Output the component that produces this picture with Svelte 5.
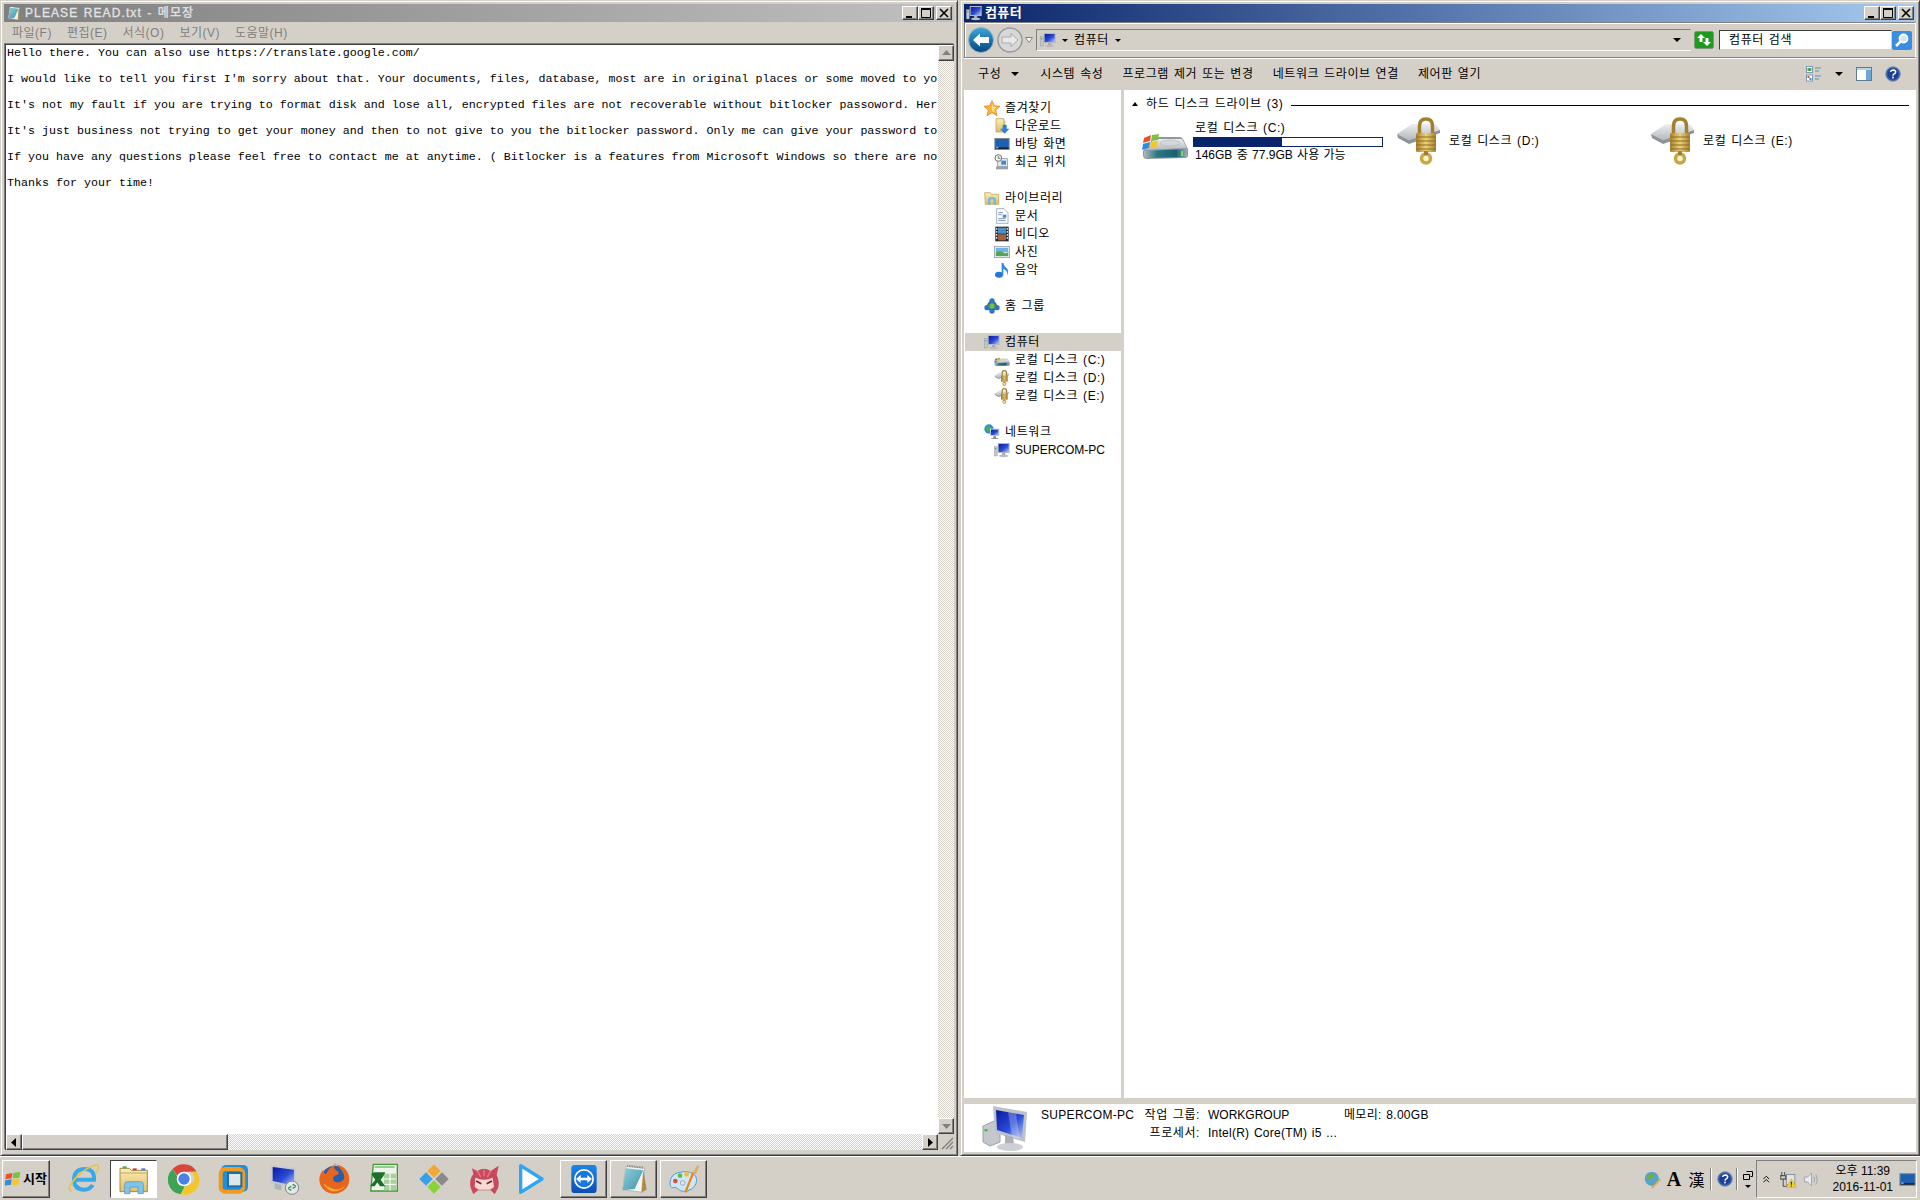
<script>
  const notes = [
    "Hello there. You can also use https://translate.google.com/",
    "I would like to tell you first I'm sorry about that. Your documents, files, database, most are in original places or some moved to yo",
    "It's not my fault if you are trying to format disk and lose all, encrypted files are not recoverable without bitlocker passoword. Her",
    "It's just business not trying to get your money and then to not give to you the bitlocker password. Only me can give your password to",
    "If you have any questions please feel free to contact me at anytime. ( Bitlocker is a features from Microsoft Windows so there are no",
    "Thanks for your time!"
  ];
  const menus = ["파일(F)", "편집(E)", "서식(O)", "보기(V)", "도움말(H)"];
  const actions = ["시스템 속성", "프로그램 제거 또는 변경", "네트워크 드라이브 연결", "제어판 열기"];
  const tree = [
    { icon: "star", label: "즐겨찾기", kids: [["dl", "다운로드"], ["desk", "바탕 화면"], ["recent", "최근 위치"]] },
    { icon: "lib", label: "라이브러리", kids: [["doc", "문서"], ["video", "비디오"], ["photo", "사진"], ["music", "음악"]] },
    { icon: "home", label: "홈 그룹", kids: [] },
    { icon: "pc", label: "컴퓨터", selected: true, kids: [["cdrive", "로컬 디스크 (C:)"], ["lockdrive", "로컬 디스크 (D:)"], ["lockdrive", "로컬 디스크 (E:)"]] },
    { icon: "net", label: "네트워크", kids: [["pc", "SUPERCOM-PC"]] }
  ];
  const free = 77.9;
  const total = 146;
  const used = ((total - free) / total) * 100;
  const pinned = [
    ["ie", ""], ["explorer", "active"], ["chrome", ""], ["vmware", ""], ["rdp", ""], ["firefox", ""],
    ["excel", ""], ["diamond", ""], ["anime", ""], ["play", ""], ["teamviewer", "running"], ["notepad", "running"], ["paint", "running"]
  ];
</script>

{#snippet icon(name, size)}
  <svg class="ic" width={size} height={size} viewBox="0 0 48 48"><use href={`#i-${name}`} /></svg>
{/snippet}

{#snippet winButtons()}
  <div class="winbtns">
    <button class="raised tb"><svg width="14" height="12" viewBox="0 0 14 12"><rect x="3" y="9" width="6" height="2" /></svg></button>
    <button class="raised tb"><svg width="14" height="12" viewBox="0 0 14 12"><path d="M2.500 2.500h9v8h-9z" fill="none" stroke="#000" /><rect x="2" y="1" width="10" height="2" /></svg></button>
    <button class="raised tb close"><svg width="14" height="12" viewBox="0 0 14 12"><path d="M3 2l8 8M11 2l-8 8" stroke="#000" stroke-width="1.6" /></svg></button>
  </div>
{/snippet}

<svg class="defs" width="0" height="0" aria-hidden="true">
  <defs>
    <linearGradient id="g-screen" x1="0" y1="0" x2="1" y2="1"><stop offset="0" stop-color="#0a1a9c" /><stop offset="0.55" stop-color="#2a4ad8" /><stop offset="1" stop-color="#b6c8f6" /></linearGradient>
    <linearGradient id="g-back" x1="0" y1="0" x2="0" y2="1"><stop offset="0" stop-color="#3aa6de" /><stop offset="1" stop-color="#04477e" /></linearGradient>
    <linearGradient id="g-fold" x1="0" y1="0" x2="0" y2="1"><stop offset="0" stop-color="#fbeeb4" /><stop offset="1" stop-color="#e0bd6a" /></linearGradient>
    <linearGradient id="g-gold" x1="0" y1="0" x2="1" y2="0"><stop offset="0" stop-color="#a67f28" /><stop offset="0.5" stop-color="#ecd27c" /><stop offset="1" stop-color="#a67f28" /></linearGradient>
    <linearGradient id="g-pad" x1="0" y1="0" x2="1" y2="1"><stop offset="0" stop-color="#8fd0dc" /><stop offset="1" stop-color="#3f93a8" /></linearGradient>
    <linearGradient id="g-tv" x1="0" y1="0" x2="0" y2="1"><stop offset="0" stop-color="#1a86e8" /><stop offset="1" stop-color="#0c4fb4" /></linearGradient>
    <linearGradient id="g-drive" x1="0" y1="0" x2="0" y2="1"><stop offset="0" stop-color="#eceef0" /><stop offset="1" stop-color="#b4b9be" /></linearGradient>
    <linearGradient id="g-band" x1="0" y1="0" x2="1" y2="0"><stop offset="0" stop-color="#b2b8bc" /><stop offset="0.3" stop-color="#2a7686" /><stop offset="0.75" stop-color="#1c6070" /><stop offset="1" stop-color="#a6acb0" /></linearGradient>
  </defs>

  <symbol id="i-pc" viewBox="0 0 48 48">
    <rect x="1" y="14" width="9" height="28" fill="#c4c8cc" stroke="#7c8288" />
    <rect x="3" y="18" width="4" height="4" fill="#40c040" />
    <path d="M11 3h36v30H11z" fill="#b4b9c0" />
    <path d="M14 6h30v24H14z" fill="url(#g-screen)" />
    <path d="M24 33h10v6H24z" fill="#a4a9b0" />
    <ellipse cx="29" cy="42" rx="14" ry="3.500" fill="#b8bcc2" />
  </symbol>
  <symbol id="i-pcbig" viewBox="0 0 48 48">
    <path d="M2 22l11-5 6 3v18l-10 4-7-4z" fill="#c4c8cc" stroke="#9aa0a6" />
    <rect x="3.500" y="25" width="3" height="2.500" fill="#40c040" />
    <path d="M12 2l34 6-2 30-30-9z" fill="#bcc2c8" />
    <path d="M15 6l28 5-2 23-25-8z" fill="url(#g-screen)" />
    <path d="M27 8l8 2 4 25-8-2z" fill="#fff" opacity="0.25" />
    <path d="M24 31l8 2 1 7h-9z" fill="#aab0b6" />
    <ellipse cx="29" cy="43" rx="13" ry="4" fill="#ccd0d4" />
  </symbol>
  <symbol id="i-star" viewBox="0 0 48 48">
    <path d="M24 2l7 15 17 2-13 11 4 17-15-9-15 9 4-17L0 19l17-2z" fill="#f9b53a" stroke="#d9702a" stroke-width="2" />
    <path d="M24 10l4 10 10 1-8 7 2 9-8-5z" fill="#ffe08a" />
  </symbol>
  <symbol id="i-dl" viewBox="0 0 48 48">
    <path d="M6 2h24v40H6z" fill="url(#g-fold)" stroke="#b6974a" stroke-width="2" />
    <path d="M28 8h6v32h-6z" fill="#d8bc70" />
    <path d="M26 20h12v12h8L32 47 18 32h8z" fill="#2a82d6" />
  </symbol>
  <symbol id="i-desk" viewBox="0 0 48 48">
    <rect x="1" y="6" width="46" height="36" fill="#7d8a96" />
    <rect x="4" y="9" width="40" height="27" fill="#1d5fb0" />
    <rect x="4" y="34" width="40" height="5" fill="#1b2430" />
    <rect x="6" y="32" width="7" height="5" fill="#57b0e8" />
  </symbol>
  <symbol id="i-recent" viewBox="0 0 48 48">
    <rect x="10" y="14" width="30" height="24" fill="#e4e7ea" stroke="#858b92" stroke-width="2" />
    <rect x="22" y="20" width="14" height="12" fill="#3a8ad2" />
    <circle cx="13" cy="12" r="10" fill="#f4f4f4" stroke="#6e747a" stroke-width="3" />
    <path d="M13 6v7h6" fill="none" stroke="#444" stroke-width="2" />
    <path d="M6 38h36v8H6z" fill="#9aa0a6" />
  </symbol>
  <symbol id="i-lib" viewBox="0 0 48 48">
    <path d="M2 8h16l4 5h22v30H4z" fill="url(#g-fold)" stroke="#b6974a" stroke-width="2" />
    <path d="M12 44V30q0-9 12-9t12 9v14h-7V32q0-4-5-4t-5 4v12z" fill="#6fb9e4" />
  </symbol>
  <symbol id="i-doc" viewBox="0 0 48 48">
    <path d="M8 2h22l12 12v32H8z" fill="#fff" stroke="#7f8a96" stroke-width="2" />
    <path d="M13 14h14M13 20h10M13 38h22M13 32h22" stroke="#5b7ea8" stroke-width="2.500" />
    <rect x="26" y="20" width="11" height="9" fill="#4a8cc8" />
  </symbol>
  <symbol id="i-video" viewBox="0 0 48 48">
    <rect x="4" y="2" width="40" height="44" fill="#1e2a34" />
    <rect x="12" y="5" width="24" height="18" fill="#4a90c8" />
    <rect x="12" y="25" width="24" height="18" fill="#a5623a" />
    <path d="M6 6h4v5H6zM6 15h4v5H6zM6 24h4v5H6zM6 33h4v5H6zM38 6h4v5h-4zM38 15h4v5h-4zM38 24h4v5h-4zM38 33h4v5h-4z" fill="#dde" />
  </symbol>
  <symbol id="i-photo" viewBox="0 0 48 48">
    <rect x="1" y="7" width="46" height="34" fill="#fff" stroke="#7f8a96" stroke-width="2" />
    <rect x="5" y="11" width="38" height="14" fill="#6db7de" />
    <path d="M5 25q12-7 22 0t16-2v14H5z" fill="#5aa05a" />
  </symbol>
  <symbol id="i-music" viewBox="0 0 48 48">
    <ellipse cx="15" cy="38" rx="12" ry="9" fill="#1f78d4" />
    <path d="M23 38V3h5q2 10 10 16t1 22q3-16-11-20v17z" fill="#2a8ae0" />
  </symbol>
  <symbol id="i-home" viewBox="0 0 48 48">
    <circle cx="24" cy="24" r="15" fill="#3a7a50" />
    <circle cx="24" cy="9" r="8" fill="#2f74c8" />
    <circle cx="9" cy="29" r="8" fill="#2f74c8" />
    <circle cx="39" cy="29" r="8" fill="#2f74c8" />
    <circle cx="24" cy="39" r="8" fill="#2f74c8" />
    <circle cx="24" cy="24" r="8" fill="#6ec24a" />
  </symbol>
  <symbol id="i-net" viewBox="0 0 48 48">
    <circle cx="15" cy="15" r="14" fill="#2f8fd6" />
    <path d="M6 10q8-6 14 0t-4 10-10-10z" fill="#4ab04a" />
    <rect x="18" y="14" width="28" height="22" fill="#c6cbd2" />
    <rect x="21" y="17" width="22" height="16" fill="url(#g-screen)" />
    <path d="M28 36h8v6h-8zM22 42h20v3H22z" fill="#8c9298" />
  </symbol>
  <symbol id="i-cdrive" viewBox="0 0 48 48">
    <path d="M2 34L12 22q1-2 4-2h22q3 0 4 2l5 10v6q0 3-3 3L6 42q-4 0-4-4z" fill="#8f979c" />
    <path d="M3 33l10-11h28l5 9z" fill="url(#g-drive)" />
    <ellipse cx="29" cy="26" rx="10" ry="3" fill="#d4d7da" stroke="#a6abb0" stroke-width="0.500" />
    <path d="M3 34l43-2v6q0 2-2 2L6 41q-3 0-3-3z" fill="url(#g-band)" />
    <rect x="40" y="34" width="2" height="5" fill="#5fe25f" />
    <path d="M3 21l7-3-1 6-7 2z" fill="#e8532c" />
    <path d="M11 18l7-1-1 6-7 1z" fill="#7cc23c" />
    <path d="M2 27l7-2-1 6-7 2z" fill="#2f8ae0" />
    <path d="M10 25l7-1-1 6-7 1z" fill="#f6c52e" />
  </symbol>
  <symbol id="i-lockdrive" viewBox="0 0 48 48">
    <path d="M2 17L17 7h24l4 6-31 10z" fill="url(#g-drive)" />
    <path d="M2 17l12 6 31-10v3L14 27 3 21z" fill="#8e9499" />
    <path d="M24.500 18V9q0-7 6.500-7t6.500 7v9" fill="none" stroke="#a37f2c" stroke-width="3.500" />
    <rect x="21" y="16" width="20" height="19" rx="1.500" fill="url(#g-gold)" />
    <path d="M21 20h20M21 24h20M21 28h20M21 32h20" stroke="#8e6d22" />
    <circle cx="31" cy="41.500" r="4.500" fill="#fff3c8" stroke="#c8a64a" stroke-width="3.500" />
    <rect x="29" y="34" width="4" height="4" fill="#a37f2c" />
  </symbol>

  <symbol id="i-flag" viewBox="0 0 48 48">
    <path d="M3 10l19-4-2 16-19 3z" fill="#e8532c" />
    <path d="M25 5l21-2-3 17-20 2z" fill="#7cc23c" />
    <path d="M1 28l19-3-2 16-19 3z" fill="#2f8ae0" />
    <path d="M23 25l20-2-3 18-19 2z" fill="#f6c52e" />
  </symbol>
  <symbol id="i-ie" viewBox="0 0 48 48">
    <path d="M10 25h29q1-16-14-16-15 0-16 15 0 16 15 16 9 0 13-7" fill="none" stroke="#38a8ea" stroke-width="6" />
    <path d="M6 42Q-4 40 12 22 30 4 44 3q5 3-3 13" fill="none" stroke="#ecc23c" stroke-width="2.500" />
  </symbol>
  <symbol id="i-explorer" viewBox="0 0 48 48">
    <path d="M3 8h14l3 3h24v32H3z" fill="url(#g-fold)" stroke="#a88a4a" stroke-width="1.500" />
    <path d="M4 15h39" stroke="#a88a4a" />
    <rect x="7" y="5" width="6" height="3" fill="#3fb04a" />
    <rect x="22" y="8" width="6" height="3" fill="#d83a3a" />
    <rect x="35" y="8" width="6" height="3" fill="#3a8ad8" />
    <path d="M10 46V32q0-4 4-4h20q4 0 4 4v14h-8V36H18v10z" fill="#7fc4ea" stroke="#4a92c0" />
  </symbol>
  <symbol id="i-chrome" viewBox="0 0 48 48">
    <path d="M24 2a22 22 0 0 1 19 11H24a11 11 0 0 0-10 6L7 9A22 22 0 0 1 24 2z" fill="#d9453a" />
    <path d="M7 9l9 15a9 9 0 0 0 10 9l-7 14A22 22 0 0 1 7 9z" fill="#3fa254" />
    <path d="M43 13a22 22 0 0 1-24 34l9-15a9 9 0 0 0 4-19z" fill="#f6c52e" />
    <circle cx="24" cy="24" r="11" fill="#fff" />
    <circle cx="24" cy="24" r="8.500" fill="#4a82e4" />
  </symbol>
  <symbol id="i-vmware" viewBox="0 0 48 48">
    <rect x="5" y="3" width="40" height="40" rx="7" fill="#1d8fdc" />
    <rect x="4" y="9" width="34" height="34" rx="7" fill="none" stroke="#f29a1e" stroke-width="6" />
    <rect x="15" y="15" width="20" height="20" fill="#dfe6ea" stroke="#1a6fa8" stroke-width="3" />
  </symbol>
  <symbol id="i-rdp" viewBox="0 0 48 48">
    <path d="M4 3l38 4v30L4 30z" fill="#c6cbd2" />
    <path d="M7 6l32 4v24L7 27z" fill="url(#g-screen)" />
    <path d="M10 30l10 3v8l-10-2z" fill="#b0b5bb" />
    <circle cx="36" cy="37" r="10" fill="#e4e8ea" stroke="#7c858c" stroke-width="1.500" />
    <path d="M30 38l5-3M30 38l5 3M42 35l-5 3M42 35l-5-3" stroke="#2f9a4a" stroke-width="2" />
  </symbol>
  <symbol id="i-firefox" viewBox="0 0 48 48">
    <circle cx="25" cy="24" r="20" fill="#2a5ea8" />
    <path d="M25 2c12 1 22 10 22 22 0 13-10 22-23 22S2 36 2 24c0-6 3-11 6-14 0 4 2 6 4 7 2-6 7-11 13-15-2 5 0 8 4 10 3 2 2 5-1 6-4 1-7 5-4 9 4 4 12 2 15-3 2-6-3-15-14-24z" fill="#e8651e" />
    <path d="M8 30c3 9 12 14 21 12 6-1 10-5 12-9-4 6-13 9-21 5-5-2-9-5-12-8z" fill="#f7b02a" />
  </symbol>
  <symbol id="i-excel" viewBox="0 0 48 48">
    <path d="M8 2h36v40H4z" fill="#eef4ea" stroke="#3f9a3a" stroke-width="2" />
    <path d="M24 16h18v25H24z" fill="#a9cf9c" />
    <path d="M24 24h18M24 32h18M33 16v25" stroke="#fff" stroke-width="1.500" />
    <path d="M8 13h17l-3 6-4 5 7 10H17l-4-6-4 6H2l8-10-6-8z" fill="#1f6f2c" transform="translate(1 1)" />
    <path d="M10 6h30" stroke="#6cb85e" stroke-width="2" />
  </symbol>
  <symbol id="i-diamond" viewBox="0 0 48 48">
    <path d="M24 2l10 10-10 10-10-10z" fill="#f2a838" />
    <path d="M36 14l10 10-10 10-10-10z" fill="#8a8a8a" />
    <path d="M12 14l10 10-10 10L2 24z" fill="#38a0e8" />
    <path d="M24 26l10 10-10 10-10-10z" fill="#8ad23a" />
  </symbol>
  <symbol id="i-anime" viewBox="0 0 48 48">
    <path d="M6 8l8 4q10-7 20 0l12-8-3 14q5 10 2 20l-5 9-6-6H15l-7 6-4-10Q1 25 8 17z" fill="#c84a5c" />
    <path d="M11 22q13 6 26 0l2 14-6 4H16l-6-4z" fill="#f7d8d4" />
    <path d="M12 27l8 4M36 27l-8 4" stroke="#7a1c2c" stroke-width="2.500" />
    <path d="M14 12l5 9M24 10v10M34 12l-5 9" stroke="#e87a86" stroke-width="2" />
  </symbol>
  <symbol id="i-play" viewBox="0 0 48 48">
    <path d="M4 4l32 20L4 44z" fill="#fff" stroke="#2ea6f5" stroke-width="5" stroke-linejoin="round" />
  </symbol>
  <symbol id="i-teamviewer" viewBox="0 0 48 48">
    <rect x="5" y="3" width="38" height="42" rx="5" fill="url(#g-tv)" />
    <circle cx="24" cy="24" r="15" fill="#fff" />
    <circle cx="24" cy="24" r="12.500" fill="#1a78dc" />
    <path d="M12 24l7-6v4h10v-4l7 6-7 6v-4H19v4z" fill="#fff" />
  </symbol>
  <symbol id="i-notepad" viewBox="0 0 48 48">
    <path d="M12 5l28 3-3 36-30-4z" fill="#f4f6f6" stroke="#9aa4a8" />
    <path d="M12 8l26 3-13 28-18 2z" fill="url(#g-pad)" />
    <path d="M38 10l5 30-8 4z" fill="#b08a48" />
    <path d="M14 4l24 3" stroke="#777" stroke-width="3" stroke-dasharray="1 1.500" />
  </symbol>
  <symbol id="i-paint" viewBox="0 0 48 48">
    <path d="M3 30Q3 14 24 13q18 0 19 12 0 12-14 17-9 2-14-3-3-4-8-2-4 0-4-7z" fill="#cfe6f4" stroke="#5d9cc8" stroke-width="1.500" />
    <circle cx="11" cy="27" r="3.500" fill="#e04a3a" />
    <circle cx="18" cy="19" r="3.500" fill="#5cc04a" />
    <circle cx="28" cy="17" r="3.500" fill="#f2c02e" />
    <circle cx="22" cy="30" r="3.500" fill="#d8e8f2" stroke="#6a9cc0" />
    <path d="M26 44L38 14" stroke="#e8861e" stroke-width="3.500" />
    <path d="M37 15l7-12 3 2-5 12z" fill="#d8b070" />
  </symbol>
  <symbol id="i-globe" viewBox="0 0 48 48">
    <circle cx="22" cy="22" r="20" fill="#5aa2c8" />
    <path d="M8 14q10-8 22-6-2 8-8 10t-6 10q-8-4-8-14z" fill="#6fb040" />
    <path d="M24 44L44 22l3 3-20 21-6 1z" fill="#f2c25a" stroke="#a8702a" />
  </symbol>
  <symbol id="i-help" viewBox="0 0 48 48">
    <circle cx="24" cy="24" r="22" fill="#2f5aa8" stroke="#8a96a8" stroke-width="3" />
    <circle cx="24" cy="24" r="16" fill="#1f3e96" />
    <path d="M17 18q1-6 8-6 7 1 7 6 0 4-5 6-3 2-3 5" fill="none" stroke="#fff" stroke-width="4.500" />
    <rect x="21.500" y="32" width="5" height="5" fill="#fff" />
  </symbol>
  <symbol id="i-traynet" viewBox="0 0 48 48">
    <rect x="18" y="10" width="24" height="28" fill="#dfe3e6" stroke="#71787e" stroke-width="2" />
    <path d="M5 3v10M13 3v10M2 13h14v10H2zM9 23v20h12" fill="none" stroke="#555" stroke-width="3" />
    <path d="M32 22l14 24H18z" fill="#f6d02e" stroke="#a88a1a" />
    <rect x="30.500" y="30" width="3" height="9" fill="#222" />
    <rect x="30.500" y="41" width="3" height="3" fill="#222" />
  </symbol>
  <symbol id="i-speaker" viewBox="0 0 48 48">
    <path d="M4 17h9L24 6v36L13 31H4z" fill="#e8eaec" stroke="#8a9096" stroke-width="2" />
    <path d="M30 16q5 8 0 16M36 10q8 14 0 28" fill="none" stroke="#a2a8ae" stroke-width="3" />
  </symbol>
</svg>

<div class="desktop">
  <div class="windows">
    <section class="win notepad">
      <header class="title inactive">
        {@render icon("notepad", 16)}
        <span class="title-text">PLEASE READ.txt - 메모장</span>
        {@render winButtons()}
      </header>
      <nav class="menu">
        {#each menus as m}<span>{m}</span>{/each}
      </nav>
      <div class="pane">
        <div class="text">
          {#each notes as line}<p>{line}</p>{/each}
        </div>
        <div class="vscroll">
          <button class="raised sb"><svg width="9" height="6" viewBox="0 0 9 6"><path d="M0 5h9L4.500 0z" fill="#808080" /></svg></button>
          <div class="track"></div>
          <button class="raised sb"><svg width="9" height="6" viewBox="0 0 9 6"><path d="M0 1h9L4.500 6z" fill="#808080" /></svg></button>
        </div>
        <div class="hscroll">
          <button class="raised sb"><svg width="6" height="9" viewBox="0 0 6 9"><path d="M5 0v9L0 4.500z" /></svg></button>
          <div class="raised thumb"></div>
          <div class="track"></div>
          <button class="raised sb"><svg width="6" height="9" viewBox="0 0 6 9"><path d="M1 0v9l5-4.500z" /></svg></button>
        </div>
        <div class="grip"><svg width="16" height="16" viewBox="0 0 16 16"><path d="M15 4L4 15M15 8l-7 7M15 12l-3 3" stroke="#808080" stroke-width="1.400" /></svg></div>
      </div>
    </section>

    <section class="win explorer">
      <header class="title active">
        {@render icon("pc", 16)}
        <span class="title-text big">컴퓨터</span>
        {@render winButtons()}
      </header>

      <div class="navbar">
        <svg class="navbtn" width="26" height="26" viewBox="0 0 26 26">
          <circle cx="13" cy="13" r="12.500" fill="url(#g-back)" stroke="#9fb2c0" />
          <path d="M5 13l7-6.500V10h9v6h-9v3.500z" fill="#fff" />
        </svg>
        <svg class="navbtn fwd" width="26" height="26" viewBox="0 0 26 26">
          <circle cx="13" cy="13" r="12" fill="#d8d8d8" stroke="#9a9a9a" stroke-width="1.500" />
          <path d="M21 13l-7-6.500V10H5v6h9v3.500z" fill="#e8e8e8" stroke="#aaa" />
        </svg>
        <svg class="navdrop" width="8" height="6" viewBox="0 0 8 6"><path d="M.5.5h7L4 5.500z" fill="#fff" stroke="#808080" /></svg>
        <div class="address">
          {@render icon("pc", 16)}
          <i class="caret small"></i>
          <span>컴퓨터</span>
          <i class="caret small"></i>
          <i class="caret end"></i>
        </div>
        <button class="go">
          <svg width="20" height="18" viewBox="0 0 20 18">
            <rect x=".5" y=".5" width="19" height="17" rx="2" fill="#1f9a1f" stroke="#7a9a7a" />
            <path d="M3 7l4-4 4 4H8.500v4h-3V7zM17 11l-4 4-4-4h2.500V7h3v4z" fill="#fff" />
          </svg>
        </button>
        <div class="search">
          <span>컴퓨터 검색</span>
        </div>
        <button class="searchbtn">
          <svg width="20" height="19" viewBox="0 0 20 19">
            <rect width="20" height="19" rx="2" fill="#3a8ee0" />
            <circle cx="11.500" cy="7.500" r="4" fill="#cfe6f8" stroke="#fff" stroke-width="1.800" />
            <path d="M8.500 10.500L4 15" stroke="#fff" stroke-width="2.500" />
          </svg>
        </button>
      </div>

      <div class="toolbar">
        <span class="organize">구성</span><i class="caret"></i>
        {#each actions as a}<span class="act">{a}</span>{/each}
        <div class="tools">
          <svg width="16" height="16" viewBox="0 0 16 16">
            <rect x=".5" y=".5" width="6" height="6" fill="#fff" stroke="#7f9ab0" />
            <rect x="1.500" y="2" width="4" height="3" fill="#5aa05a" />
            <rect x=".5" y="9" width="6" height="6" fill="#fff" stroke="#7f9ab0" />
            <rect x="1.500" y="10" width="2" height="2" fill="#d84a3a" />
            <rect x="3.500" y="12" width="2" height="2" fill="#3a8ad8" />
            <path d="M9 2h6M9 5h4M9 10h6M9 13h4" stroke="#6a8aa8" />
          </svg>
          <i class="caret"></i>
          <svg class="panebtn" width="16" height="16" viewBox="0 0 16 16">
            <rect x=".5" y="1.500" width="15" height="13" fill="#fff" stroke="#5a7a98" />
            <rect x="10" y="2" width="5" height="12" fill="#6aa8d8" />
            <rect x="1" y="2" width="14" height="2" fill="#bcd4e8" />
          </svg>
          {@render icon("help", 16)}
        </div>
      </div>

      <div class="body">
        <aside class="side">
          {#each tree as group}
            <ul class="group">
              <li class="node" class:selected={group.selected}>
                {@render icon(group.icon, 16)}<span>{group.label}</span>
              </li>
              {#each group.kids as [ic, label]}
                <li class="node kid">{@render icon(ic, 16)}<span class:latin={label === "SUPERCOM-PC"}>{label}</span></li>
              {/each}
            </ul>
          {/each}
        </aside>
        <main class="content">
          <div class="group-head">
            <svg width="6" height="4" viewBox="0 0 6 4"><path d="M0 4h6L3 0z" /></svg>
            <span>하드 디스크 드라이브 (3)</span>
            <div class="rule"></div>
          </div>
          <div class="drives">
            <div class="drive">
              {@render icon("cdrive", 48)}
              <div class="info">
                <div class="dname">로컬 디스크 (C:)</div>
                <div class="bar"><div class="fill" style={`width:${used}%`}></div></div>
                <div class="dsub">146GB 중 77.9GB 사용 가능</div>
              </div>
            </div>
            <div class="drive">
              {@render icon("lockdrive", 48)}
              <div class="dname">로컬 디스크 (D:)</div>
            </div>
            <div class="drive">
              {@render icon("lockdrive", 48)}
              <div class="dname">로컬 디스크 (E:)</div>
            </div>
          </div>
        </main>
      </div>

      <footer class="status">
        {@render icon("pcbig", 48)}
        <div class="facts">
          <div class="f1"><span class="host">SUPERCOM-PC</span><span>작업 그룹:</span></div>
          <div class="latin">WORKGROUP</div>
          <div class="mem">메모리: 8.00GB</div>
          <div class="f2">프로세서:</div>
          <div class="wide">Intel(R) Core(TM) i5 ...</div>
        </div>
      </footer>
    </section>
  </div>

  <div class="taskbar">
    <button class="raised start">{@render icon("flag", 16)}<b>시작</b></button>
    <div class="pins">
      {#each pinned as [name, state]}
        <div class="pin {state}">{@render icon(name, 32)}</div>
      {/each}
    </div>
    <div class="lang">
      {@render icon("globe", 17)}
      <span class="a">A</span>
      <span class="han">漢</span>
      <span class="sep"></span>
      {@render icon("help", 16)}
      <span class="sep"></span>
      <div class="langmin">
        <svg width="10" height="9" viewBox="0 0 10 9"><path d="M3.500.5h6v5h-2M.5 3.500h6v5h-6z" fill="none" stroke="#000" /></svg>
        <i class="caret small"></i>
      </div>
    </div>
    <div class="tray">
      <svg class="chev" width="7" height="8" viewBox="0 0 7 8"><path d="M.5 4l3-3 3 3M.5 7.500l3-3 3 3" fill="none" stroke="#000" /></svg>
      {@render icon("traynet", 17)}
      {@render icon("speaker", 17)}
      <div class="clock"><div>오후 11:39</div><div>2016-11-01</div></div>
      {@render icon("desk", 17)}
    </div>
  </div>
</div>

<style>
  :global(body) {
    margin: 0;
    background: #d4d0c8;
  }

  .defs {
    position: absolute;
  }

  .desktop {
    width: 1920px;
    height: 1200px;
    display: flex;
    flex-direction: column;
    background: #d4d0c8;
    overflow: hidden;
    font: 12px/16px "Liberation Sans", "Noto Sans CJK KR", sans-serif;
    color: #000;
    word-spacing: 1px;
    letter-spacing: 0.6px;
  }

  .ic {
    flex: none;
    display: block;
  }

  .windows {
    height: 1156px;
    display: flex;
    gap: 2px;
  }

  /* classic window frame */
  .win {
    box-sizing: border-box;
    height: 100%;
    display: flex;
    flex-direction: column;
    padding: 3px;
    border: 1px solid;
    border-color: #d4d0c8 #404040 #404040 #d4d0c8;
    box-shadow: inset 1px 1px #fff, inset -1px -1px #808080;
  }

  .notepad {
    width: 958px;
  }

  .explorer {
    width: 960px;
  }

  .title {
    flex: none;
    height: 18px;
    display: flex;
    align-items: center;
    padding-left: 2px;
    gap: 3px;
    color: #fff;
    font-weight: bold;
  }

  .title.inactive {
    background: linear-gradient(90deg, #808080, #c0c0c0);
    color: #e4e4e4;
  }

  .title.active {
    background: linear-gradient(90deg, #0a246a, #a6caf0);
  }

  .title-text {
    font-size: 12px;
    font-weight: normal;
    letter-spacing: 1.1px;
    -webkit-text-stroke: 0.3px currentColor;
  }

  .title-text.big {
    font-size: 13px;
    font-weight: bold;
    letter-spacing: 0.4px;
    -webkit-text-stroke: 0;
  }

  .winbtns {
    margin-left: auto;
    display: flex;
    padding-right: 2px;
  }

  button {
    padding: 0;
    margin: 0;
    font: inherit;
    letter-spacing: inherit;
    display: flex;
    align-items: center;
    justify-content: center;
    box-sizing: border-box;
  }

  .raised {
    background: #d4d0c8;
    border: 1px solid;
    border-color: #fff #404040 #404040 #fff;
    box-shadow: inset -1px -1px #808080;
  }

  .tb {
    width: 16px;
    height: 14px;
  }

  .tb.close {
    margin-left: 2px;
  }

  .menu {
    flex: none;
    height: 21px;
    display: flex;
    align-items: center;
    gap: 15px;
    padding-left: 8px;
    color: #808080;
    font-size: 12px;
    word-spacing: 0;
    letter-spacing: 0.5px;
  }

  /* sunken edge: dark line inside, mid grey line outside */
  .pane {
    flex: 1;
    min-height: 0;
    margin: 1px 0 2px 1px;
    display: grid;
    grid-template-columns: minmax(0, 1fr) 16px;
    grid-template-rows: minmax(0, 1fr) 16px;
    border-left: 1px solid #404040;
    border-top: 1px solid #404040;
    box-shadow: -1px -1px #808080;
    background: #fff;
  }

  .text {
    overflow: hidden;
    padding: 0 1px;
    font: 11.67px/16px "Liberation Mono", monospace;
    word-spacing: 0;
    letter-spacing: 0;
    white-space: pre;
  }

  .text p {
    margin: 0 0 10px;
  }

  .vscroll {
    display: flex;
    flex-direction: column;
  }

  .hscroll {
    display: flex;
  }

  .sb {
    flex: none;
    width: 16px;
    height: 16px;
  }

  .track {
    flex: 1;
    background: repeating-conic-gradient(#d4d0c8 0 25%, #fff 0 50%) 0 0 / 2px 2px;
  }

  .thumb {
    box-sizing: border-box;
    width: 206px;
  }

  .grip {
    background: #d4d0c8;
  }

  .navbar {
    flex: none;
    box-sizing: border-box;
    height: 36px;
    display: flex;
    align-items: center;
    padding: 0 3px 0 3px;
    border: 1px solid #808080;
    border-right-color: #fff;
    box-shadow: inset 1px 1px #fff, 0 1px #fff;
  }

  .navbtn {
    flex: none;
  }

  .fwd {
    margin-left: 3px;
  }

  .navdrop {
    margin: 0 2px 0 2px;
    flex: none;
  }

  .address {
    width: 656px;
    height: 22px;
    box-sizing: border-box;
    display: flex;
    align-items: center;
    gap: 3px;
    padding-left: 3px;
    margin-left: 1px;
    border: 1px solid;
    border-color: #808080 #d4d0c8 #fff #808080;
  }

  .caret {
    display: block;
    flex: none;
    width: 0;
    height: 0;
    border: 4px solid transparent;
    border-top: 4px solid #000;
    border-bottom: 0;
  }

  .caret.small {
    border-width: 3px 3px 0;
    border-top-color: #000;
    margin: 0 3px;
  }

  .caret.end {
    margin-left: auto;
    margin-right: 9px;
  }

  .go {
    width: 20px;
    height: 18px;
    border: 0;
    background: none;
    margin: 0 5px 0 3px;
  }

  .search {
    flex: none;
    width: 173px;
    height: 20px;
    box-sizing: border-box;
    background: #fff;
    border: 1px solid;
    border-color: #404040 #d4d0c8 #d4d0c8 #404040;
    padding-left: 9px;
    display: flex;
    align-items: center;
  }

  .searchbtn {
    width: 20px;
    height: 19px;
    border: 0;
    background: none;
  }

  .toolbar {
    flex: none;
    height: 32px;
    display: flex;
    align-items: center;
    padding-left: 14px;
  }

  .organize {
    margin-right: 10px;
  }

  .act {
    margin-left: 19px;
  }

  .organize + .caret + .act {
    margin-left: 21px;
  }

  .tools {
    margin-left: auto;
    display: flex;
    align-items: center;
    padding-right: 15px;
  }

  .tools .caret {
    margin: 0 13px;
    border-width: 4px 4px 0;
  }

  .panebtn {
    margin-right: 13px;
  }

  .body {
    flex: 1;
    min-height: 0;
    display: flex;
    gap: 3px;
    margin-bottom: 6px;
  }

  .side {
    flex: none;
    width: 157px;
    background: #fff;
    padding-top: 9px;
    box-sizing: border-box;
  }

  .group {
    list-style: none;
    margin: 0 0 18px;
    padding: 0;
  }

  .node {
    height: 18px;
    display: flex;
    align-items: center;
    gap: 5px;
    padding-left: 20px;
    white-space: nowrap;
  }

  .node.kid {
    padding-left: 30px;
  }

  .node.selected {
    background: #d4d0c8;
    margin-left: 1px;
    padding-left: 19px;
  }

  .latin {
    letter-spacing: 0;
  }

  .content {
    flex: 1;
    background: #fff;
    padding: 6px 7px 0 8px;
  }

  .group-head {
    height: 16px;
    display: flex;
    align-items: center;
  }

  .group-head span {
    margin: 0 7px 0 8px;
    letter-spacing: 0.7px;
  }

  .rule {
    flex: 1;
    height: 1px;
    background: #000;
    margin-top: 3px;
  }

  .drives {
    display: grid;
    grid-template-columns: repeat(3, 254px);
    margin: 5px 0 0 9px;
  }

  .drive {
    display: flex;
    align-items: center;
    gap: 6px;
    height: 48px;
  }

  .info {
    padding-top: 3px;
    align-self: flex-start;
  }

  .bar {
    box-sizing: border-box;
    width: 190px;
    height: 10px;
    margin: 1px 0 1px -2px;
    border: 1px solid #0a246a;
    background: #fff;
  }

  .fill {
    height: 100%;
    background: #0a246a;
  }

  .dsub {
    line-height: 14px;
    letter-spacing: 0;
  }

  .status {
    flex: none;
    height: 48px;
    background: #fff;
    display: flex;
    gap: 12px;
    padding-left: 17px;
    align-items: flex-start;
  }

  .facts {
    padding-top: 2px;
    display: grid;
    grid-template-columns: 159px 128px auto;
    grid-auto-rows: 18px;
    column-gap: 8px;
    align-items: center;
  }

  .f1 {
    display: flex;
    justify-content: space-between;
  }

  .host {
    letter-spacing: 0.3px;
  }

  .f2 {
    text-align: right;
  }

  .mem {
    letter-spacing: 0.3px;
  }

  .wide {
    grid-column: span 2;
    letter-spacing: 0.25px;
  }

  .taskbar {
    flex: 1;
    display: flex;
    align-items: center;
    padding: 1px 3px 0 2px;
    border-top: 1px solid #fff;
  }

  .start {
    width: 48px;
    height: 38px;
    gap: 2px;
    font-size: 13px;
    word-spacing: 0;
    letter-spacing: 0;
    flex: none;
  }

  .pins {
    display: flex;
    gap: 3px;
    margin-left: 10px;
  }

  .pin {
    box-sizing: border-box;
    width: 47px;
    height: 38px;
    display: flex;
    align-items: center;
    justify-content: center;
    border: 1px solid transparent;
  }

  .pin.running {
    background: #d4d0c8;
    border-color: #fff #404040 #404040 #fff;
    box-shadow: inset -1px -1px #808080;
  }

  .pin.active {
    border-color: #404040 #fff #fff #404040;
    background: #fff;
  }

  .lang {
    margin-left: auto;
    display: flex;
    align-items: center;
    height: 32px;
  }

  .a {
    font: bold 20px/1 "Liberation Serif", serif;
    width: 16px;
    text-align: center;
    margin-left: 5px;
  }

  .han {
    font: 16px/1 "Noto Sans CJK KR", sans-serif;
    margin: 0 5px 0 6px;
  }

  .sep {
    width: 1px;
    height: 22px;
    background: #808080;
    box-shadow: 1px 0 #fff;
    margin: 0 6px 0 0;
  }

  .lang .ic:nth-of-type(2) {
    margin-right: 3px;
  }

  .langmin {
    display: flex;
    flex-direction: column;
    align-items: center;
    gap: 5px;
    margin: 0 2px 0 -1px;
  }

  .tray {
    box-sizing: border-box;
    width: 161px;
    height: 38px;
    display: flex;
    align-items: center;
    padding: 0 0 0 4px;
    border: 1px solid;
    border-color: #808080 #fff #fff #808080;
    outline: 1px solid #d4d0c8;
  }

  .chev {
    margin: 0 10px 0 2px;
  }

  .tray .ic:nth-of-type(3) {
    margin-left: 6px;
  }

  .clock {
    margin: 0 6px 0 13px;
    width: 62px;
    text-align: center;
    white-space: nowrap;
    word-spacing: 0;
    letter-spacing: 0;
  }
</style>
